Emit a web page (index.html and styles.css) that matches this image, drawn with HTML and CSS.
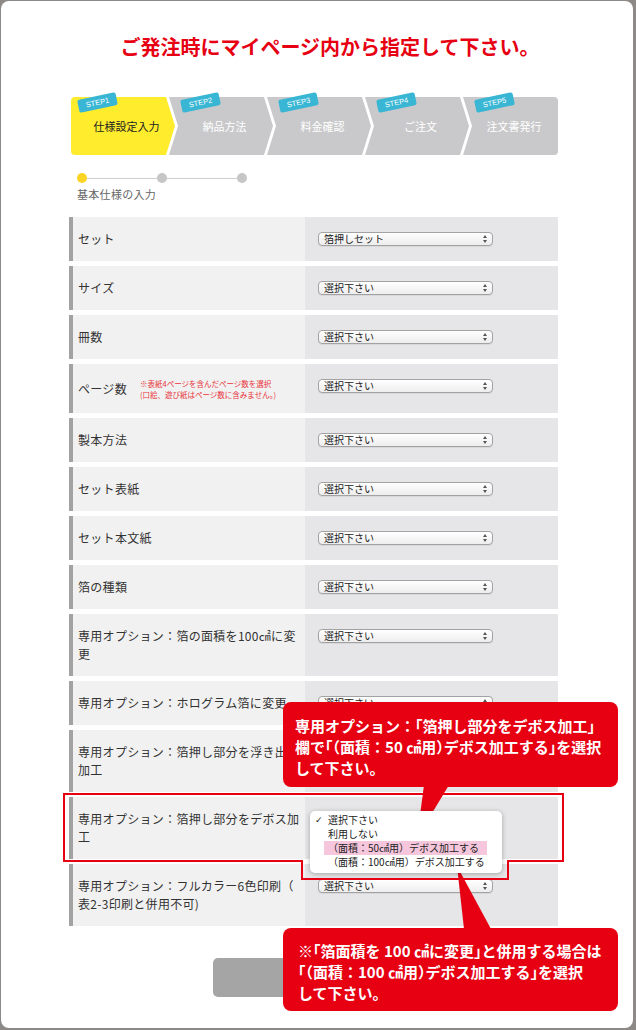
FILE: index.html
```html
<!DOCTYPE html>
<html lang="ja">
<head>
    <meta charset="UTF-8">
    <title>仕様設定入力</title>
    <link rel="stylesheet" href="styles.css">
</head>
<body>
    <div id="frame">
        <h1 class="page-title">ご発注時にマイページ内から指定して下さい。</h1>

        <div class="content">
            <div class="steps">
                <div class="step"><span class="badge">STEP1</span>仕様設定入力</div>
                <div class="step"><span class="badge">STEP2</span>納品方法</div>
                <div class="step"><span class="badge">STEP3</span>料金確認</div>
                <div class="step"><span class="badge">STEP4</span>ご注文</div>
                <div class="step"><span class="badge">STEP5</span>注文書発行</div>
            </div>

            <div class="progress">
                <span class="dot current"></span><span class="bar"></span>
                <span class="dot"></span><span class="bar"></span>
                <span class="dot"></span>
            </div>
            <div class="progress-label">基本仕様の入力</div>

            <div class="spec">
                <div class="row">
                    <div class="row-label">セット</div>
                    <div class="row-value"><span class="sel"><select><option>箔押しセット</option></select></span></div>
                </div>
                <div class="row">
                    <div class="row-label">サイズ</div>
                    <div class="row-value"><span class="sel"><select><option>選択下さい</option></select></span></div>
                </div>
                <div class="row">
                    <div class="row-label">冊数</div>
                    <div class="row-value"><span class="sel"><select><option>選択下さい</option></select></span></div>
                </div>
                <div class="row tall">
                    <div class="row-label">ページ数
                        <span class="note">※表紙4ページを含んだページ数を選択<br>(口絵、遊び紙はページ数に含みません。)</span>
                    </div>
                    <div class="row-value"><span class="sel"><select><option>選択下さい</option></select></span></div>
                </div>
                <div class="row">
                    <div class="row-label">製本方法</div>
                    <div class="row-value"><span class="sel"><select><option>選択下さい</option></select></span></div>
                </div>
                <div class="row">
                    <div class="row-label">セット表紙</div>
                    <div class="row-value"><span class="sel"><select><option>選択下さい</option></select></span></div>
                </div>
                <div class="row">
                    <div class="row-label">セット本文紙</div>
                    <div class="row-value"><span class="sel"><select><option>選択下さい</option></select></span></div>
                </div>
                <div class="row">
                    <div class="row-label">箔の種類</div>
                    <div class="row-value"><span class="sel"><select><option>選択下さい</option></select></span></div>
                </div>
                <div class="row">
                    <div class="row-label">専用オプション：箔の面積を100㎠に変更</div>
                    <div class="row-value"><span class="sel"><select><option>選択下さい</option></select></span></div>
                </div>
                <div class="row">
                    <div class="row-label">専用オプション：ホログラム箔に変更</div>
                    <div class="row-value"><span class="sel"><select><option>選択下さい</option></select></span></div>
                </div>
                <div class="row">
                    <div class="row-label">専用オプション：箔押し部分を浮き出し加工</div>
                    <div class="row-value"><span class="sel"><select><option>選択下さい</option></select></span></div>
                </div>
                <div class="row">
                    <div class="row-label">専用オプション：箔押し部分をデボス加工</div>
                    <div class="row-value open">
                        <span class="sel"><select><option>選択下さい</option></select></span>
                        <!-- 開いた状態のプルダウン -->
                        <div class="menu">
                            <div class="menu-item checked">選択下さい</div>
                            <div class="menu-item">利用しない</div>
                            <div class="menu-item marked">（面積：50㎠用）デボス加工する</div>
                            <div class="menu-item">（面積：100㎠用）デボス加工する</div>
                        </div>
                    </div>
                </div>
                <div class="row">
                    <div class="row-label">専用オプション：フルカラー6色印刷（表2-3印刷と併用不可)</div>
                    <div class="row-value"><span class="sel"><select><option>選択下さい</option></select></span></div>
                </div>
            </div>
        </div>

        <button class="next-btn" aria-label="次へ進む"></button>

        <!-- 注釈：赤枠と吹き出し -->
        <svg class="marks" viewBox="1 1 632 1027" width="632" height="1027">
            <polygon points="64,794 563,794 563,861 508,861 508,879 302,879 302,861 64,861" fill="none" stroke="#e60012" stroke-width="2"/>
            <polygon points="424,785 449,785 417,838" fill="#e60012"/>
            <polygon points="457,866 464,929 491,929" fill="#e60012"/>
        </svg>

        <div class="callout callout-1">
            専用オプション：「箔押し部分をデボス加工」<br>
            欄で<span class="h">「</span>（面積：50 ㎠用<span class="h">）</span>デボス加工する<span class="h">」</span>を選択<br>
            して下さい。
        </div>
        <div class="callout callout-2">
            ※<span class="h">「</span>箔面積を 100 ㎠に変更<span class="h">」</span>と併用する場合は<br>
            <span class="h">「</span>（面積：100 ㎠用<span class="h">）</span>デボス加工する<span class="h">」</span>を選択<br>
            して下さい。
        </div>
    </div>
</body>
</html>
```

FILE: styles.css
```css
body {
    margin: 0;
    background-color: #8d8986;
    font-family: "Noto Sans CJK JP", "Liberation Sans", sans-serif;
    color: #333;
}
#frame {
    position: relative;
    width: 632px;
    height: 1027px;
    margin: 1px 0 0 1px;
    padding-top: 34px;
    box-sizing: border-box;
    background-color: #fff;
    border-radius: 8px;
}
.page-title {
    margin: 0;
    padding-left: 26px;
    font-size: 20px;
    line-height: 24px;
    font-weight: bold;
    color: #e60012;
    text-align: center;
}
.content {
    width: 489px;
    margin-left: 68px;
}

/* ステップ */
.steps {
    display: flex;
    height: 58px;
    margin: 38px 0 0 2px;
}
.step {
    position: relative;
    isolation: isolate;
    flex: none;
    width: 104px;
    height: 58px;
    margin-left: -6px;
    padding: 0 7px 0 14px;
    box-sizing: border-box;
    display: flex;
    align-items: center;
    justify-content: center;
    font-size: 11px;
    color: #fff;
}
.step::before {
    content: "";
    position: absolute;
    inset: 0;
    z-index: -1;
    background-color: #c9c9cb;
    clip-path: polygon(0 0, calc(100% - 9px) 0, 100% 50%, calc(100% - 9px) 100%, 0 100%, 9px 50%);
}
.step:first-child {
    margin-left: 0;
    color: #222;
}
.step:first-child::before {
    background-color: #ffec2d;
    border-radius: 4px 0 0 4px;
    clip-path: polygon(0 0, calc(100% - 9px) 0, 100% 50%, calc(100% - 9px) 100%, 0 100%);
}
.step:last-child {
    width: 95px;
}
.step:last-child::before {
    border-radius: 0 4px 4px 0;
    clip-path: polygon(0 0, 100% 0, 100% 100%, 0 100%, 9px 50%);
}
.badge {
    position: absolute;
    top: -1px;
    left: 12px;
    width: 39px;
    height: 13px;
    background-color: #38b6d4;
    border-radius: 2px;
    transform: rotate(-12deg);
    font: 7.5px/13px "Liberation Sans", sans-serif;
    color: #fff;
    text-align: center;
}
.step:first-child .badge {
    left: 7px;
}

/* 進捗 */
.progress {
    display: flex;
    align-items: center;
    margin: 18px 0 0 8px;
}
.dot {
    width: 10px;
    height: 10px;
    border-radius: 50%;
    background-color: #c6c6c6;
}
.dot.current {
    background-color: #fcd424;
}
.bar {
    width: 70px;
    height: 1px;
    background-color: #cfcfcf;
}
.progress-label {
    margin: 3px 0 0 8px;
    font-size: 11px;
    line-height: 16px;
    letter-spacing: 0.3px;
    color: #666;
}

/* 仕様テーブル */
.spec {
    margin-top: 15px;
}
.row {
    display: grid;
    grid-template-columns: 236px 1fr;
    min-height: 44px;
    margin-bottom: 5px;
}
.row.tall {
    min-height: 49px;
}
.row-label {
    display: flex;
    align-items: center;
    padding: 13px 4px 13px 5px;
    border-left: 4px solid #a2a2a2;
    background-color: #f1f1f1;
    font-size: 12px;
    line-height: 18px;
    letter-spacing: 0.3px;
    color: #333;
    line-break: anywhere;
}
.note {
    margin-left: 13px;
    font-size: 7.5px;
    line-height: 11px;
    letter-spacing: 0;
    color: #e8333a;
}
.row-value {
    padding: 15px 0 0 13px;
    background-color: #e6e6e8;
}
.row-value.open {
    position: relative;
}
.sel {
    position: relative;
    display: block;
    width: 175px;
    height: 14px;
}
.sel select {
    appearance: none;
    display: block;
    width: 100%;
    height: 14px;
    margin: 0;
    padding: 0 0 0 5px;
    box-sizing: border-box;
    border: 1px solid #a2a2a2;
    border-radius: 4px;
    background: linear-gradient(#fff, #ededed);
    box-shadow: 0 1px 0 rgba(0, 0, 0, 0.06);
    font: 10px/12px "Noto Sans CJK JP", sans-serif;
    color: #222;
}
.sel::before,
.sel::after {
    content: "";
    position: absolute;
    right: 6px;
    border-left: 2px solid transparent;
    border-right: 2px solid transparent;
}
.sel::before {
    top: 3px;
    border-bottom: 3px solid #555;
}
.sel::after {
    bottom: 3px;
    border-top: 3px solid #555;
}

/* 開いたプルダウン */
.menu {
    position: absolute;
    left: 5px;
    top: 14px;
    z-index: 2;
    width: 192px;
    height: 62px;
    padding-top: 2px;
    box-sizing: border-box;
    background-color: #fff;
    border-radius: 5px;
    box-shadow: 0 1px 5px rgba(0, 0, 0, 0.3);
    font-size: 10px;
    line-height: 14px;
    color: #222;
}
.menu-item {
    position: relative;
    margin: 0 15px 0 14px;
    padding-left: 4px;
}
.menu-item.checked::before {
    content: "✓";
    position: absolute;
    left: -9px;
    font-family: "DejaVu Sans", sans-serif;
    font-size: 9px;
    font-weight: bold;
}
.menu-item.marked {
    background-color: #f6c6dc;
}

.next-btn {
    display: block;
    width: 208px;
    height: 39px;
    margin: 32px auto 0;
    border: 0;
    border-radius: 5px;
    background-color: #a5a5a5;
}

/* 注釈 */
.marks {
    position: absolute;
    left: 0;
    top: 0;
    pointer-events: none;
}
.callout {
    position: absolute;
    left: 282px;
    width: 335px;
    box-sizing: border-box;
    background-color: #e60012;
    border-radius: 8px;
    color: #fff;
    font-size: 15px;
    font-weight: bold;
    line-height: 21px;
    white-space: nowrap;
}
.callout-1 {
    top: 701px;
    height: 85px;
    padding: 13px 0 0 12px;
}
.callout-2 {
    top: 927px;
    height: 83px;
    padding: 12px 0 0 15px;
}
.h {
    font-feature-settings: "halt";
}
```
